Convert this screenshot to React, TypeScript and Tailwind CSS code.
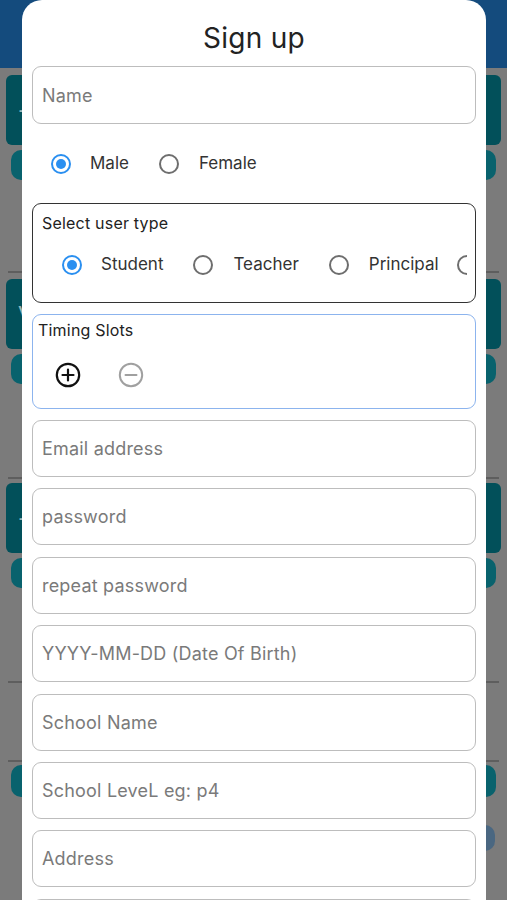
import React from "react";

function Radio({ checked }: { checked?: boolean }) {
  return checked ? (
    <div className="w-[20px] h-[20px] shrink-0 rounded-full border-[2.5px] border-[#2a8ff0] flex items-center justify-center">
      <div className="w-[10px] h-[10px] rounded-full bg-[#2a8ff0]" />
    </div>
  ) : (
    <div className="w-[20px] h-[20px] shrink-0 rounded-full border-[2px] border-[#6e6e6e]" />
  );
}

function Field({ placeholder }: { placeholder: string }) {
  return (
    <div className="h-[57px] shrink-0 border border-[#bdbdbd] rounded-[9px] flex items-center px-[9px] text-[18px] text-[#7a7a7a] tracking-[0.2px]">
      {placeholder}
    </div>
  );
}

function BgCard({ letter }: { letter?: string }) {
  return (
    <div className="flex flex-col">
      <div className="h-[70px] mx-[6px] rounded-[6px] bg-[#02505a] flex items-center pl-[12px] text-white/60 text-[22px]">
        {letter}
      </div>
      <div className="h-[30px] mx-[11px] mt-[5px] rounded-[10px] bg-[#09626d]" />
    </div>
  );
}

export default function App() {
  return (
    <div
      className="relative w-[507px] h-[900px] overflow-hidden bg-[#7b7b7b]"
      style={{ fontFamily: "Inter, 'Noto Sans', sans-serif" }}
    >
      {/* dimmed background app */}
      <div className="h-[68px] bg-[#144b7d]" />
      <div className="flex flex-col pt-[7px]">
        <BgCard letter="-" />
        <div className="h-[2px] bg-[#5e5e5e] mt-[91px] mx-[8px]" />
        <div className="mt-[6px]">
          <BgCard letter="V" />
        </div>
        <div className="h-[2px] bg-[#5e5e5e] mt-[93px] mx-[8px]" />
        <div className="mt-[4px]">
          <BgCard letter="-" />
        </div>
        <div className="h-[2px] bg-[#5e5e5e] mt-[93px] mx-[8px]" />
        <div className="h-[2px] bg-[#5e5e5e] mt-[77px] mx-[8px]" />
        <div className="h-[32px] mx-[11px] mt-[3px] rounded-[10px] bg-[#09626d]" />
        <div className="self-end mr-[12px] mt-[28px] w-[20px] h-[26px] rounded-full bg-[#2a5a86]/60" />
      </div>

      {/* modal sheet */}
      <div className="absolute left-[22px] top-0 w-[464px] h-[940px] bg-white rounded-t-[20px] px-[10px] pt-[20px]">
        <div className="text-center text-[28px] leading-[36px] text-[#222] tracking-[0.3px]">Sign up</div>

        <div className="mt-[10px] h-[58px] border border-[#bdbdbd] rounded-[9px] flex items-center px-[9px] text-[18px] text-[#7a7a7a] tracking-[0.2px]">
          Name
        </div>

        <div className="mt-[20px] h-[40px] flex items-center pl-[19px] text-[17px] text-[#333]">
          <Radio checked />
          <span className="ml-[19px]">Male</span>
          <div className="ml-[30px]">
            <Radio />
          </div>
          <span className="ml-[20px]">Female</span>
        </div>

        <div className="mt-[19px] h-[100px] border-[1.5px] border-[#333] rounded-[9px] pl-[9px] pt-[8px]">
          <div className="text-[16px] leading-[22px] text-[#222] tracking-[0.2px]">Select user type</div>
          <div className="mt-[11px] mr-[8px] overflow-hidden">
            <div className="flex items-center ml-[20px] h-[40px] text-[17px] text-[#333] whitespace-nowrap">
              <Radio checked />
              <span className="ml-[19px]">Student</span>
              <div className="ml-[30px]">
                <Radio />
              </div>
              <span className="ml-[20px]">Teacher</span>
              <div className="ml-[30px]">
                <Radio />
              </div>
              <span className="ml-[20px]">Principal</span>
              <div className="ml-[18px]">
                <Radio />
              </div>
            </div>
          </div>
        </div>

        <div className="mt-[11px] h-[95px] border border-[#8cb4ee] rounded-[9px] pl-[5px] pt-[4px]">
          <div className="text-[16px] leading-[22px] text-[#222] tracking-[0.2px]">Timing Slots</div>
          <div className="mt-[21px] flex items-center pl-[17px]">
            <svg width="26" height="26" viewBox="0 0 26 26" fill="none">
              <circle cx="13" cy="13" r="11.2" stroke="#111" strokeWidth="2.2" />
              <path d="M13 7.5v11M7.5 13h11" stroke="#111" strokeWidth="2.2" strokeLinecap="round" />
            </svg>
            <svg className="ml-[37px]" width="26" height="26" viewBox="0 0 26 26" fill="none">
              <circle cx="13" cy="13" r="11.2" stroke="#a0a0a0" strokeWidth="2" />
              <path d="M7.5 13h11" stroke="#a0a0a0" strokeWidth="2" strokeLinecap="round" />
            </svg>
          </div>
        </div>

        <div className="mt-[11px] flex flex-col gap-[11.4px]">
          <Field placeholder="Email address" />
          <Field placeholder="password" />
          <Field placeholder="repeat password" />
          <Field placeholder="YYYY-MM-DD (Date Of Birth)" />
          <Field placeholder="School Name" />
          <Field placeholder="School LeveL eg: p4" />
          <Field placeholder="Address" />
          <Field placeholder="" />
        </div>
      </div>
    </div>
  );
}
